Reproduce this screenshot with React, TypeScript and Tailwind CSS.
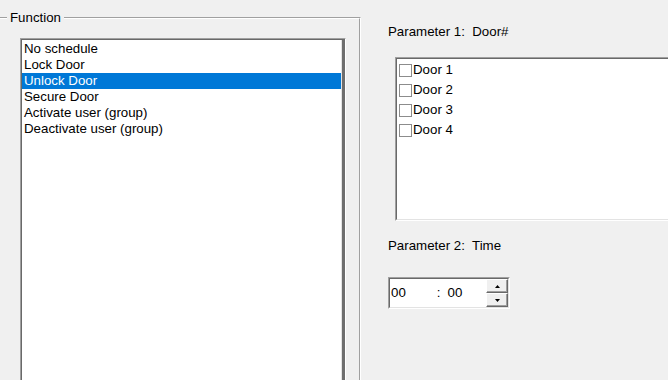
import React from 'react';

const functions = [
    'No schedule',
    'Lock Door',
    'Unlock Door',
    'Secure Door',
    'Activate user (group)',
    'Deactivate user (group)',
];

const doors = ['Door 1', 'Door 2', 'Door 3', 'Door 4'];

function SpinButton({ up }: { up?: boolean }) {
    return (
        <div className="h-[14px] flex items-center justify-center bg-[#f0f0f0] border border-t-white border-l-white border-r-[#696969] border-b-[#696969] shadow-[inset_-1px_-1px_0_#a0a0a0]">
            <svg width="5" height="3" viewBox="0 0 5 3">
                {up ? <polygon points="2.5,0 5,3 0,3" fill="#000" /> : <polygon points="0,0 5,0 2.5,3" fill="#000" />}
            </svg>
        </div>
    );
}

export default function App() {
    const selected = 2;

    return (
        <div className="w-[668px] h-[380px] overflow-hidden bg-[#f0f0f0] flex font-['Liberation_Sans',Arial,sans-serif] text-[13.3px] leading-[16px] text-black">
            {/* Function group box */}
            <div className="relative mt-[17px] w-[361px] h-[400px] shrink-0 border-t border-t-[#a0a0a0] border-r border-r-white">
                <span className="absolute left-[7px] top-[-8px] px-[3px] bg-[#f0f0f0]">Function</span>
                <div className="h-full border-t border-t-white border-r border-r-[#a0a0a0] pl-[20px] pt-[19px]">
                    <div className="w-[326px] h-[360px] border-t border-l border-[#a0a0a0] border-r border-r-white">
                        <div className="h-full border-t border-l border-[#696969] border-r-[3px] border-r-[#6e6e6e]">
                            <div className="h-full bg-white border-r border-r-[#e3e3e3] pt-[1px]">
                                {functions.map((f, i) => (
                                    <div
                                        key={f}
                                        className={i === selected ? 'h-[16px] pl-[2px] bg-[#0078d7] text-white' : 'h-[16px] pl-[2px]'}
                                    >
                                        {f}
                                    </div>
                                ))}
                            </div>
                        </div>
                    </div>
                </div>
            </div>

            {/* Parameters */}
            <div className="ml-[27px] pt-[24px] flex flex-col">
                <div className="whitespace-pre">Parameter 1:  Door#</div>

                <div className="ml-[7px] mt-[17px] w-[300px] h-[164px] border-t border-l border-[#a0a0a0] border-b border-b-white">
                    <div className="h-full bg-white border-t border-l border-[#696969] border-b border-b-[#e3e3e3] pt-[1px] pl-[2px]">
                        {doors.map(d => (
                            <div key={d} className="h-[20px] flex items-center">
                                <span className="w-[13px] h-[13px] border border-[#8c8c8c] bg-white" />
                                <span className="ml-[1px]">{d}</span>
                            </div>
                        ))}
                    </div>
                </div>

                <div className="mt-[17px] whitespace-pre">Parameter 2:  Time</div>

                <div className="mt-[23px] w-[122px] h-[32px] border border-[#a0a0a0] border-r-white border-b-white">
                    <div className="h-full flex bg-white border border-[#696969] border-r-[#e3e3e3] border-b-[#e3e3e3]">
                        <div className="flex-1 flex items-center pl-[1px]">
                            <span>00</span>
                            <span className="ml-[31px]">:</span>
                            <span className="ml-[7px]">00</span>
                        </div>
                        <div className="w-[22px] flex flex-col">
                            <SpinButton up />
                            <SpinButton />
                        </div>
                    </div>
                </div>
            </div>
        </div>
    );
}
